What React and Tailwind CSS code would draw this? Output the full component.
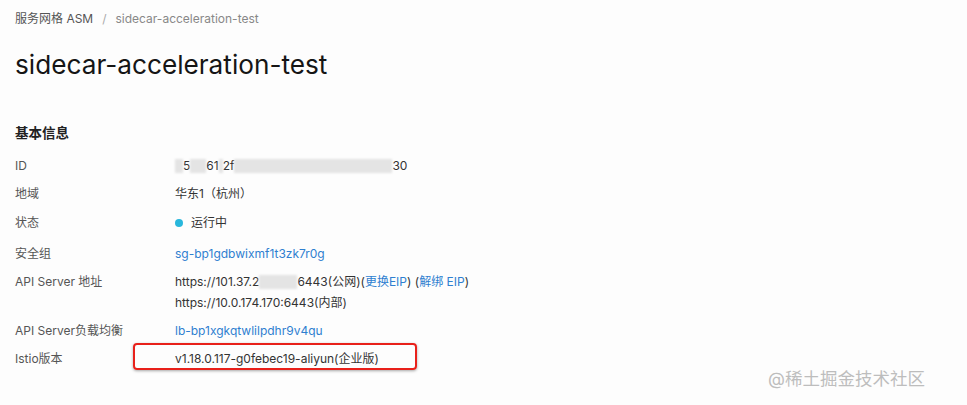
import React from "react";

const font = "font-['Inter','Noto_Sans_CJK_SC',sans-serif]";

const Blur = ({ w }) => (
  <span className={`inline-block h-[14px] ${w} bg-[#e4e4e4] blur-[1px] align-middle`} />
);

const Row = ({ label, children, className = "" }) => (
  <div className={`flex ${className}`}>
    <div className="w-[160px] shrink-0 text-[#555]">{label}</div>
    <div className="text-[#333]">{children}</div>
  </div>
);

const Link = ({ children }) => <span className="text-[#2f7fd0]">{children}</span>;

export default function App() {
  return (
    <div className={`relative w-[967px] h-[405px] overflow-hidden bg-[#fdfdfd] ${font} text-[12px]`}>
      <div className="px-[15px] pt-[11px]">
        <div className="flex items-center text-[12px] leading-[16px]">
          <span className="text-[#555]">服务网格 ASM</span>
          <span className="mx-[9px] text-[#aaa]">/</span>
          <span className="text-[#888]">sidecar-acceleration-test</span>
        </div>

        <h1 className="mt-[21px] text-[26.2px] leading-[34px] text-[#151515]">
          sidecar-acceleration-test
        </h1>

        <h2 className="mt-[42px] text-[13.5px] font-bold text-[#222] leading-[18px]">基本信息</h2>

        <div className="mt-[16px] flex flex-col leading-[16px]">
          <Row label="ID">
            <span className="inline-flex items-center text-[#333]">
              <Blur w="w-[8px]" />
              <span>5</span>
              <Blur w="w-[16px]" />
              <span>61</span>
              <Blur w="w-[4px]" />
              <span>2f</span>
              <Blur w="w-[158px]" />
              <span>30</span>
            </span>
          </Row>
          <Row label="地域" className="mt-[9px]">华东1（杭州）</Row>
          <Row label="状态" className="mt-[13px]">
            <span className="inline-flex items-center">
              <span className="w-[8px] h-[8px] rounded-full bg-[#29b7dc] mr-[8px]" />
              运行中
            </span>
          </Row>
          <Row label="安全组" className="mt-[15px]">
            <Link>sg-bp1gdbwixmf1t3zk7r0g</Link>
          </Row>
          <Row label="API Server 地址" className="mt-[12px]">
            <div className="flex flex-col gap-[5px]">
              <div className="inline-flex items-center">
                <span>https://101.37.2</span>
                <Blur w="w-[38px]" />
                <span>6443(公网)(</span>
                <Link>更换EIP</Link>
                <span>) (</span>
                <Link>解绑 EIP</Link>
                <span>)</span>
              </div>
              <div>https://10.0.174.170:6443(内部)</div>
            </div>
          </Row>
          <Row label="API Server负载均衡" className="mt-[12px]">
            <Link>lb-bp1xgkqtwlilpdhr9v4qu</Link>
          </Row>
          <Row label="Istio版本" className="mt-[12px]">
            <span className="relative">
              v1.18.0.117-g0febec19-aliyun(企业版)
              <span className="absolute left-[-42px] top-[-8px] w-[284px] h-[27px] rounded-[4px] border-2 border-[#e8201a] shadow-[0_1px_3px_rgba(0,0,0,0.35)]" />
            </span>
          </Row>
        </div>
      </div>

      <div className="absolute right-[42px] bottom-[13px] text-[17.5px] text-[#bdbdbd]">@稀土掘金技术社区</div>
    </div>
  );
}
